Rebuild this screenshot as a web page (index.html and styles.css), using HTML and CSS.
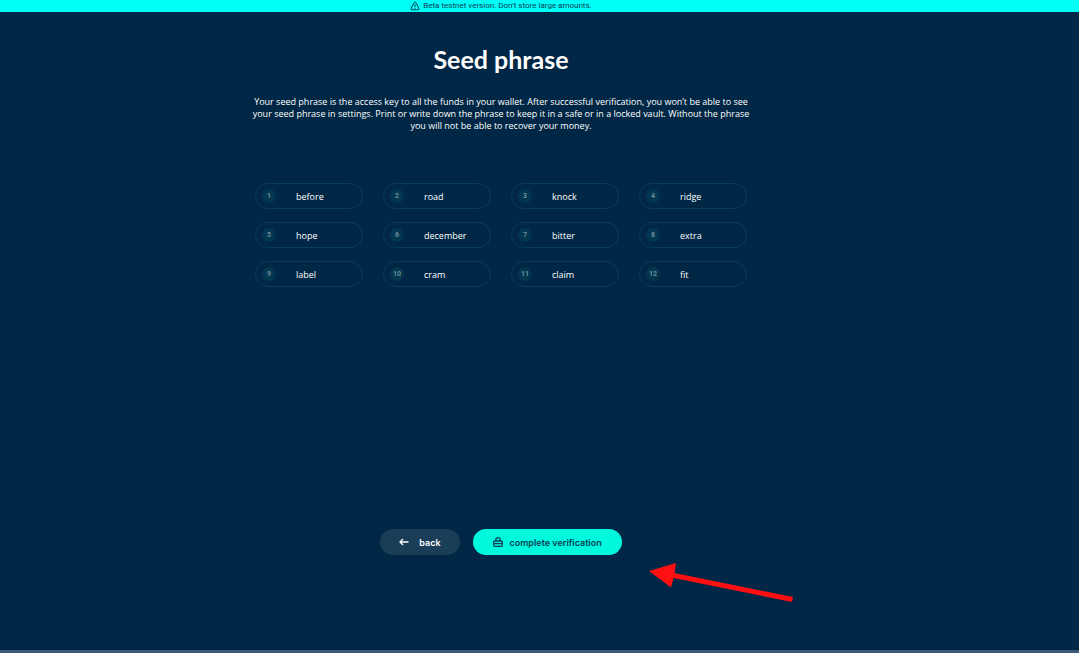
FILE: index.html
```html
<!DOCTYPE html>
<html lang="en">
<head>
<meta charset="utf-8">
<meta name="viewport" content="width=device-width, initial-scale=1">
<title>Seed phrase</title>
<link rel="stylesheet" href="styles.css">
</head>
<body>
<div class="banner" role="status">
  <svg class="banner-icon" viewBox="0 0 20 20" aria-hidden="true"><path d="M8 3.500 2.200 14.500Q1 17.500 4 17.500H16Q19 17.500 17.800 14.500L12 3.500Q10 .8 8 3.500ZM10 6.500V12M10 13.500V15.500"/></svg>
  <span>Beta testnet version. Don’t store large amounts.</span>
</div>
<main class="page">
  <h1 class="title">Seed phrase</h1>
  <p class="intro">Your seed phrase is the access key to all the funds in your wallet. After successful verification, you won’t be able to see<br>your seed phrase in settings. Print or write down the phrase to keep it in a safe or in a locked vault. Without the phrase<br>you will not be able to recover your money.</p>
  <ol class="words">
    <li class="word"><span class="num">1</span><span>before</span></li>
    <li class="word"><span class="num">2</span><span>road</span></li>
    <li class="word"><span class="num">3</span><span>knock</span></li>
    <li class="word"><span class="num">4</span><span>ridge</span></li>
    <li class="word"><span class="num">5</span><span>hope</span></li>
    <li class="word"><span class="num">6</span><span>december</span></li>
    <li class="word"><span class="num">7</span><span>bitter</span></li>
    <li class="word"><span class="num">8</span><span>extra</span></li>
    <li class="word"><span class="num">9</span><span>label</span></li>
    <li class="word"><span class="num">10</span><span>cram</span></li>
    <li class="word"><span class="num">11</span><span>claim</span></li>
    <li class="word"><span class="num">12</span><span>fit</span></li>
  </ol>
  <div class="actions">
    <button class="btn btn-back" type="button">
      <svg class="btn-icon" viewBox="0 0 10 10" aria-hidden="true"><path d="M9.500 5H1M4 2 1 5 4 8"/></svg>
      <span>back</span>
    </button>
    <button class="btn btn-complete" type="button">
      <svg class="btn-icon" viewBox="0 0 10 10" aria-hidden="true"><path d="M2.800 4V2.800Q2.800.7 5 .7T7.200 2.800V4M1.800 4H8.200Q9.300 4 9.300 5.200V8.200Q9.300 9.400 8.200 9.400H1.800Q.7 9.400.7 8.200V5.200Q.7 4 1.800 4ZM1 6.700H9"/></svg>
      <span>complete verification</span>
    </button>
  </div>
</main>
<svg class="pointer" viewBox="0 0 144 39" aria-hidden="true"><path d="M0 8 27 0 25.500 10 144 34 143 39 24.500 15 22 24.500Z"/></svg>
</body>
</html>
```
FILE: styles.css
```css
* {
  box-sizing: border-box;
}

body {
  margin: 0;
  min-height: 100vh;
  display: flex;
  flex-direction: column;
  border-bottom: 3px solid #3c5a76;
  background: #002745;
  color: #fff;
  font-family: "Open Sans", sans-serif;
  font-size: 9px;
}

.banner {
  display: flex;
  align-items: center;
  justify-content: center;
  gap: 3px;
  height: 12px;
  padding-right: 77px;
  background: #00fff6;
  color: #063a55;
  font-family: Roboto, sans-serif;
  font-size: 8px;
  line-height: 10px;
}

.banner-icon {
  width: 10px;
  height: 10px;
  fill: none;
  stroke: currentColor;
  stroke-width: 2;
}

.page {
  flex: 1;
  display: flex;
  flex-direction: column;
  align-items: center;
  padding: 31px 77px 95px 0;
}

.title {
  margin: 0;
  font-family: Lato, sans-serif;
  font-size: 25px;
  font-weight: 700;
  line-height: 32px;
}

.intro {
  margin: 21px 0 0;
  line-height: 12px;
  text-align: center;
}

.words {
  display: grid;
  grid-template-columns: repeat(4, 1fr);
  gap: 13px 20px;
  width: 100%;
  max-width: 492px;
  margin: 51px 0 0;
  padding: 0;
  list-style: none;
}

.word {
  display: flex;
  align-items: center;
  gap: 20px;
  height: 26px;
  padding-left: 6px;
  border: 1px solid #083f56;
  border-radius: 13px;
}

.num {
  width: 14px;
  height: 14px;
  border-radius: 50%;
  background: #03364f;
  color: #6f8e9d;
  font-family: Roboto, sans-serif;
  font-size: 7px;
  font-weight: 700;
  line-height: 14px;
  text-align: center;
}

.actions {
  display: flex;
  gap: 13px;
  margin-top: auto;
}

.btn {
  display: flex;
  align-items: center;
  height: 26px;
  padding: 0 20px;
  border: 0;
  border-radius: 13px;
  font-family: Inter, sans-serif;
  font-size: 9px;
  font-weight: 600;
}

.btn-back {
  gap: 10px;
  padding: 0 19px;
  background: #1a3d58;
  color: #fff;
}

.btn-complete {
  gap: 7px;
  background: #00f9dc;
  color: #064059;
}

.btn-icon {
  width: 10px;
  height: 10px;
  fill: none;
  stroke: currentColor;
  stroke-width: 1.3;
}

.pointer {
  position: absolute;
  left: 649px;
  top: 563px;
  width: 144px;
  height: 39px;
  fill: #fd0f12;
}
```
